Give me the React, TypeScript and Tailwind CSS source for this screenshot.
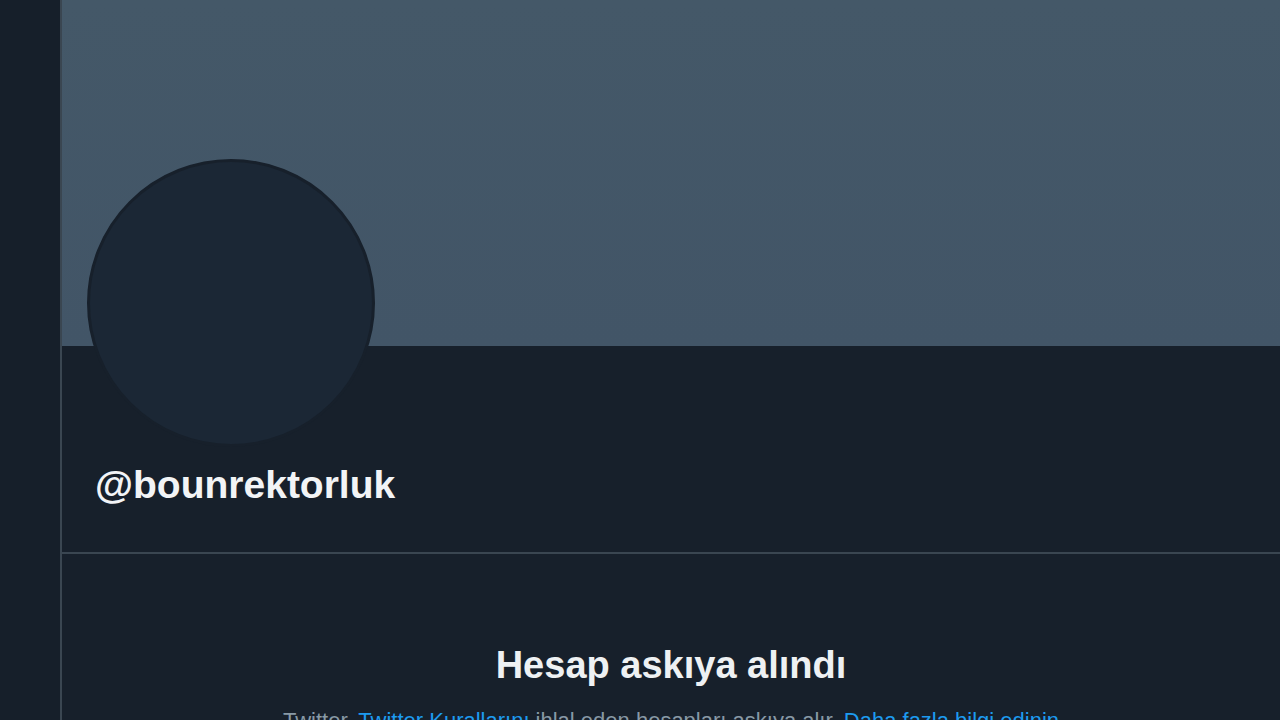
export default function App() {
  return (
    <div
      className="flex h-[720px] w-[1280px] overflow-hidden bg-[#17202b]"
      style={{ fontFamily: '"Liberation Sans", Arial, sans-serif' }}
    >
      {/* sol kenar çubuğu */}
      <div className="h-full w-[60px] shrink-0 bg-[#161f2a]" />

      <main className="flex min-w-0 flex-1 flex-col border-l-2 border-[#3a4651]">
        {/* kapak */}
        <div className="relative h-[346px] shrink-0 bg-gradient-to-b from-[#445868] to-[#425567]">
          <div className="absolute left-[25px] top-[159px] h-[288px] w-[288px] rounded-full border-[3px] border-[#17202b] bg-[#1b2735]" />
        </div>

        {/* profil */}
        <div className="border-b-2 border-[#3a4651] pb-[48px] pl-[33px] pt-[119px]">
          <h1 className="text-[39px] font-bold leading-none text-[#f2f4f6]">@bounrektorluk</h1>
        </div>

        {/* askıya alındı */}
        <div className="flex flex-col items-center pt-[92px]">
          <h2 className="text-[38px] font-bold leading-none text-[#eef1f3]">Hesap askıya alındı</h2>
          <p className="mt-[26px] whitespace-nowrap text-[22px] leading-none text-[#8899a6]">
            Twitter, <span className="text-[#1d9bf0]">Twitter Kurallarını</span> ihlal eden hesapları askıya alır.{" "}
            <span className="text-[#1d9bf0]">Daha fazla bilgi edinin</span>
          </p>
        </div>
      </main>
    </div>
  );
}
